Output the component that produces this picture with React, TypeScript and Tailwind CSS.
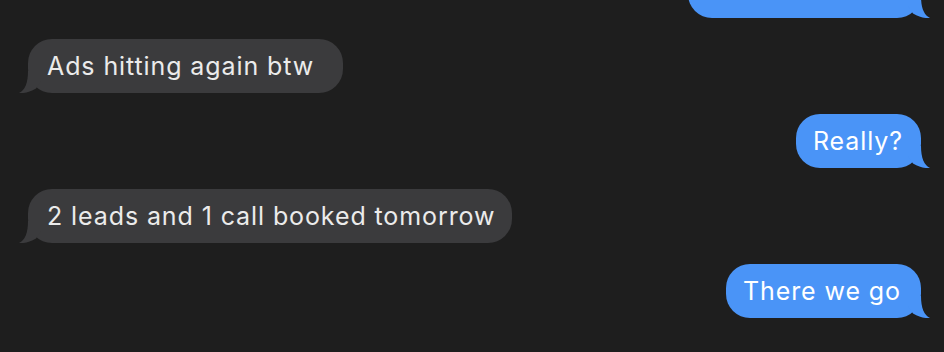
import React from "react";

type Msg = { text: string; from: "me" | "them"; width: number };

const messages: Msg[] = [
  { text: "Just remind me", from: "me", width: 233 },
  { text: "Ads hitting again btw", from: "them", width: 315 },
  { text: "Really?", from: "me", width: 125 },
  { text: "2 leads and 1 call booked tomorrow", from: "them", width: 484 },
  { text: "There we go", from: "me", width: 195 },
];

function Tail({ side, color }: { side: "left" | "right"; color: string }) {
  const flip = side === "left";
  return (
    <svg
      width="22"
      height="22"
      viewBox="0 0 22 22"
      className={
        flip
          ? "absolute bottom-0 left-[-9px] -scale-x-100"
          : "absolute bottom-0 right-[-9px]"
      }
    >
      <path
        d="M13 0 C13 12 16 19 22 22 C16 22.5 11 21 5 17.5 L0 10 L0 0 Z"
        fill={color}
      />
    </svg>
  );
}

function Bubble({ msg }: { msg: Msg }) {
  const me = msg.from === "me";
  const color = me ? "#4a94f7" : "#3b3b3d";
  return (
    <div className={me ? "flex justify-end pr-[23px]" : "flex justify-start pl-[28px]"}>
      <div
        className={
          me
            ? "relative flex h-[54px] items-center rounded-[24px] bg-[#4a94f7] pl-[17px] text-white"
            : "relative flex h-[54px] items-center rounded-[24px] bg-[#3b3b3d] pl-[19px] text-[#ebebeb]"
        }
        style={{ width: msg.width }}
      >
        <span className="whitespace-nowrap text-[25px] leading-none tracking-[0.9px]">
          {msg.text}
        </span>
        <Tail side={me ? "right" : "left"} color={color} />
      </div>
    </div>
  );
}

export default function App() {
  return (
    <div
      className="h-[352px] w-[944px] overflow-hidden bg-[#1e1e1e]"
      style={{ fontFamily: "Inter, 'Noto Sans', sans-serif" }}
    >
      <div className="mt-[-36px] flex flex-col gap-[21px]">
        {messages.map((m, i) => (
          <Bubble key={i} msg={m} />
        ))}
      </div>
    </div>
  );
}
